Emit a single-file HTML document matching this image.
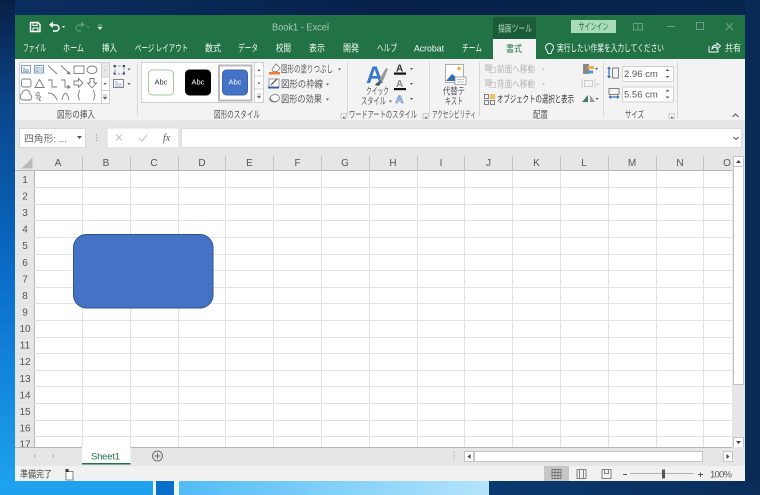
<!DOCTYPE html>
<html lang="ja"><head><meta charset="utf-8"><title>Book1 - Excel</title>
<style>
html,body{margin:0;padding:0;width:760px;height:495px;overflow:hidden;background:#0a2a55}
svg{display:block;filter:blur(.25px)}
text{font-family:"Liberation Sans","Noto Sans CJK JP",sans-serif;font-size:9px;fill:#444}
.tab{fill:#f4f8f6;font-size:9.500px}
.g{fill:#555;font-size:9.500px}
.h{fill:#555;font-size:10px;text-anchor:middle}
.r{fill:#555;font-size:10px;text-anchor:middle}
.d{fill:#b5b5b5;font-size:9.500px}
.i{fill:none;stroke:#7a7a7a;stroke-width:.9}
</style></head><body>
<svg width="760" height="495" viewBox="0 0 760 495" xmlns="http://www.w3.org/2000/svg">
<defs>
<linearGradient id="lft" x1="0" y1="0" x2="0" y2="1"><stop offset="0" stop-color="#081f45"/><stop offset=".2" stop-color="#0a4488"/><stop offset=".55" stop-color="#0a6cc8"/><stop offset="1" stop-color="#1ea4f0"/></linearGradient>
<linearGradient id="top" x1="0" y1="0" x2="1" y2="0"><stop offset="0" stop-color="#0a2f60"/><stop offset=".5" stop-color="#07214a"/><stop offset="1" stop-color="#07264f"/></linearGradient>
<linearGradient id="lb" x1="0" y1="0" x2="1" y2="0"><stop offset="0" stop-color="#52bcf5"/><stop offset="1" stop-color="#b4e4fb"/></linearGradient>
<linearGradient id="rb" x1="0" y1="0" x2="1" y2="0"><stop offset="0" stop-color="#0a3a70"/><stop offset="1" stop-color="#0a2d5a"/></linearGradient>
</defs>
<!-- desktop -->
<rect width="760" height="495" fill="url(#top)"/>
<rect width="15" height="495" fill="url(#lft)"/>
<rect x="745" width="15" height="495" fill="#082a55"/>
<rect y="481" width="153" height="14" fill="#1ea2f0"/>
<rect x="153" y="481" width="3" height="14" fill="#eaf6fd"/>
<rect x="156" y="481" width="18" height="14" fill="#0a6fc8"/>
<rect x="174" y="481" width="5" height="14" fill="#eaf6fd"/>
<rect x="179" y="481" width="310" height="14" fill="url(#lb)"/>
<rect x="489" y="481" width="271" height="14" fill="url(#rb)"/>
<!-- window -->
<rect x="15" y="15" width="730" height="466" fill="#e6e6e6"/>
<rect x="15" y="15" width="730" height="44" fill="#217346"/>
<rect x="493" y="17" width="43" height="22" fill="#1a5c38"/>
<!-- QAT -->
<g fill="none" stroke="#fff" stroke-width="1.4">
<path d="M30.500 22.500h7.500l2 2v7h-9.500z"/><path d="M33 23v2.500h4V23M33 31.500v-3.500h5v3.500" stroke-width="1"/>
<path d="M50 25h6a3 3 0 0 1 0 6h-3"/></g>
<path d="M53 21.500v6.500l-4-3.200z" fill="#fff"/>
<path d="M62 26h3l-1.500 2z" fill="#fff"/>
<path d="M84 25h-5a3 3 0 0 0 0 6h2" fill="none" stroke="#5f9a7c" stroke-width="1.200"/>
<path d="M81 21.500v6l4-3z" fill="#5f9a7c"/>
<path d="M86.500 26.500h3l-1.500 2z" fill="#5f9a7c"/>
<path d="M98 25h4M98 27h4l-2 2.500z" fill="#dcebe3" stroke="#dcebe3" stroke-width=".6"/>
<!-- title -->
<text x="272" y="30.500" style="fill:#a7c9b6;font-size:10px" textLength="57" lengthAdjust="spacingAndGlyphs">Book1  -  Excel</text>
<text x="498" y="32" style="fill:#b5d3c2;font-size:9.500px" textLength="34" lengthAdjust="spacingAndGlyphs">描画ツール</text>
<rect x="571" y="20" width="45" height="13" fill="#a9dbb9"/>
<text x="578.500" y="30" style="fill:#217346;font-size:9.500px" textLength="30" lengthAdjust="spacingAndGlyphs">サインイン</text>
<g fill="none" stroke="#74a68c" stroke-width=".9">
<rect x="633.500" y="23.500" width="9" height="6.500"/><path d="M638 23.500v6.500"/>
<path d="M667 26.500h8"/><rect x="696.500" y="22.500" width="7" height="7"/><path d="M726 23l7 7M733 23l-7 7"/></g>
<!-- tabs -->
<text class="tab" x="23" y="51.500" textLength="23" lengthAdjust="spacingAndGlyphs">ファイル</text>
<text class="tab" x="63" y="51.500" textLength="21" lengthAdjust="spacingAndGlyphs">ホーム</text>
<text class="tab" x="102" y="51.500" textLength="15" lengthAdjust="spacingAndGlyphs">挿入</text>
<text class="tab" x="135" y="51.500" textLength="53" lengthAdjust="spacingAndGlyphs">ページ レイアウト</text>
<text class="tab" x="205" y="51.500" textLength="16" lengthAdjust="spacingAndGlyphs">数式</text>
<text class="tab" x="238" y="51.500" textLength="20" lengthAdjust="spacingAndGlyphs">データ</text>
<text class="tab" x="276" y="51.500" textLength="15" lengthAdjust="spacingAndGlyphs">校閲</text>
<text class="tab" x="309" y="51.500" textLength="16" lengthAdjust="spacingAndGlyphs">表示</text>
<text class="tab" x="343" y="51.500" textLength="16" lengthAdjust="spacingAndGlyphs">開発</text>
<text class="tab" x="377" y="51.500" textLength="20" lengthAdjust="spacingAndGlyphs">ヘルプ</text>
<text class="tab" x="414" y="51.500" textLength="30" lengthAdjust="spacingAndGlyphs">Acrobat</text>
<text class="tab" x="462" y="51.500" textLength="20" lengthAdjust="spacingAndGlyphs">チーム</text>
<rect x="493" y="39" width="43" height="21" fill="#f3f3f3"/>
<text x="506" y="52" style="fill:#217346;font-size:9.500px" textLength="16" lengthAdjust="spacingAndGlyphs">書式</text>
<path d="M549.500 43.500a4 4 0 0 1 4 4c0 2-2 3-2.500 6h-3c-.5-3-2.500-4-2.500-6a4 4 0 0 1 4-4z" fill="none" stroke="#fff" stroke-width=".9"/>
<text class="tab" x="557" y="51.500" textLength="107" lengthAdjust="spacingAndGlyphs">実行したい作業を入力してください</text>
<path d="M709 46v6h9v-3M712 49c0-3 2-4 5-4v-2l3.500 3-3.500 3v-2c-2 0-4 .5-5 2z" fill="none" stroke="#fff" stroke-width=".9"/>
<text class="tab" x="725" y="51.500" textLength="16" lengthAdjust="spacingAndGlyphs">共有</text>
<!-- ribbon -->
<rect x="15" y="59" width="730" height="61" fill="#f3f3f3"/>
<g stroke="#d6d6d6"><path d="M137.500 62v54M347.500 62v54M429.500 62v54M479.500 62v54M603.500 62v54M677.500 62v56"/></g>
<!-- shapes gallery -->
<rect x="19.500" y="62.500" width="90" height="41" fill="#fff" stroke="#cfcfcf"/>
<rect x="101" y="63" width="8" height="14" fill="#e8e8e8"/>
<path d="M101.500 63v40M101.500 77h8M101.500 90.500h8" stroke="#cfcfcf"/>
<path d="M103.500 71l1.500-2 1.500 2z" fill="#c5c5c5"/><path d="M103.500 83l1.500 2 1.500-2z" fill="#555"/>
<path d="M103 95h4M103 97l2 2.500 2-2.500z" stroke="#666" stroke-width=".5" fill="#666"/>
<g class="i">
<rect x="21.500" y="65.500" width="9" height="7.500" stroke="#6f8fb8"/><path d="M23 68h2M23 70h6M23 71.800h6" stroke="#6f8fb8"/>
<rect x="34.500" y="65.500" width="9" height="7.500" stroke="#6f8fb8"/><path d="M36 67.500h2v4h-2zM40 67v5M42 67v5" stroke="#6f8fb8" stroke-width=".7"/>
<path d="M48 65.500l9 8.500M61 65.500l9 8.500"/><path d="M70 74l-2.500-.5 1.500-1.500z" fill="#777"/>
<rect x="74" y="66" width="10" height="7.500"/><ellipse cx="92" cy="69.800" rx="5" ry="3.800"/>
<rect x="21.500" y="79" width="9.500" height="8" rx="2"/><path d="M35 87.500l4.500-8 4.500 8z"/>
<path d="M48 80h4v7h5M61 80h4v7h4"/><path d="M70 87l-2-1.500v3z" fill="#777"/>
<path d="M74 81h4.500v-2.500l4.500 4.500-4.500 4.500v-2.500h-4.500z"/><path d="M90 78.500h4v4.500h2.500l-4.500 5-4.500-5h2.500z"/>
<path d="M23 100a3.500 3.500 0 0 1-1-6.500 4 4 0 0 1 8 1 3 3 0 0 1 0 5.500z"/>
<path d="M38 92l-2.500 3 3 1-2 2 4 3-1.500-3 2-1-2.500-2 1-2z" stroke-width=".7"/>
<path d="M48 93c4 0 7 2 9 7M62 100c2-9 5-9 7 0"/>
<path d="M80 92.500c-1.500 0-1 3-1.500 4s-1 1-1 1 .500 0 1 1 0 3.500 1.500 3.500" transform="translate(0 -2)"/>
<path d="M93 92.500c1.500 0 1 3 1.500 4s1 1 1 1-.5 0-1 1 0 3.500-1.500 3.500" transform="translate(0 -2)"/>
</g>
<!-- edit shape -->
<g fill="#fff" stroke="#3f6fb5" stroke-width=".8"><path d="M115 66h9v8h-9z" stroke-dasharray="2 1.500" fill="none"/></g>
<g fill="#444"><rect x="113.500" y="65" width="2" height="2"/><rect x="123" y="65" width="2" height="2"/><rect x="113.500" y="72.500" width="2" height="2"/><rect x="123" y="72.500" width="2" height="2"/></g>
<path d="M127.500 68.500h3l-1.500 2z" fill="#555"/>
<rect x="113.500" y="79.500" width="10" height="8" fill="#fff" stroke="#666" stroke-width=".8"/><path d="M115 82h3M115 84h7M115 86h7" stroke="#3f6fb5" stroke-width=".6"/>
<path d="M127.500 83h3l-1.500 2z" fill="#555"/>
<text class="g" x="57" y="118" textLength="38" lengthAdjust="spacingAndGlyphs">図形の挿入</text>
<!-- style gallery -->
<rect x="141.500" y="62.500" width="122" height="40" fill="#fff" stroke="#cfcfcf"/>
<rect x="219" y="65.500" width="32.500" height="35" fill="#fff" stroke="#b9b9b9" stroke-width="2"/>
<rect x="148.500" y="70" width="25" height="25" rx="4" fill="#fff" stroke="#a4c896"/>
<rect x="185" y="69.500" width="26" height="26" rx="4.500" fill="#000"/>
<rect x="222.500" y="70" width="25" height="25" rx="4" fill="#4472c4" stroke="#3a62aa"/>
<text x="154.500" y="84.500" style="fill:#333;font-size:7.500px">Abc</text>
<text x="191.500" y="84.500" style="fill:#fff;font-size:7.500px">Abc</text>
<text x="228.500" y="84.500" style="fill:#fff;font-size:7.500px">Abc</text>
<path d="M254.500 63v39M254.500 76h9M254.500 89h9" stroke="#cfcfcf"/>
<path d="M257.500 71l1.500-2 1.500 2z" fill="#555"/><path d="M257.500 82.500l1.500 2 1.500-2z" fill="#555"/>
<path d="M257 94h4M257 96l2 2.500 2-2.500z" stroke="#777" stroke-width=".5" fill="#777"/>
<!-- fill/outline/effect -->
<path d="M272 69l4-5 4 4-3 3.500h-4z" fill="#fff" stroke="#777" stroke-width=".8"/>
<rect x="269" y="72" width="11" height="2.500" fill="#ed7d31"/>
<text class="g" x="281" y="72.500" textLength="52" lengthAdjust="spacingAndGlyphs">図形の塗りつぶし</text>
<path d="M338 68.500h3l-1.500 2z" fill="#555"/>
<rect x="269" y="79" width="10" height="8" fill="#fff" stroke="#777" stroke-width=".7"/><path d="M271 85l6-6" stroke="#444" stroke-width="1.200"/>
<rect x="268" y="86.500" width="11" height="2" fill="#2f5fb3"/>
<text class="g" x="281" y="87.500" textLength="42" lengthAdjust="spacingAndGlyphs">図形の枠線</text>
<path d="M326 83.500h3l-1.500 2z" fill="#555"/>
<ellipse cx="274" cy="99" rx="5" ry="3.500" fill="#999"/><ellipse cx="275" cy="98" rx="4.500" ry="3.500" fill="#fff" stroke="#666" stroke-width=".7"/>
<text class="g" x="281" y="102.500" textLength="41" lengthAdjust="spacingAndGlyphs">図形の効果</text>
<path d="M326 98.500h3l-1.500 2z" fill="#555"/>
<text class="g" x="214" y="118" textLength="46" lengthAdjust="spacingAndGlyphs">図形のスタイル</text>
<path d="M341 113.500h5v5h-5z" fill="none" stroke="#aaa" stroke-width=".6"/><path d="M343 116l3 2.500h-3z" fill="#777"/>
<!-- wordart -->
<text x="366" y="83" style="fill:#3a78c8;font-size:24px;font-weight:bold">A</text>
<path d="M379 80l7-12 2 1-5 12z" fill="#999"/><path d="M375 85c2-3 4-4 6-3l-1 3c-2 1-3 1-5 0z" fill="#555"/>
<text class="g" x="366" y="94.500" textLength="23" lengthAdjust="spacingAndGlyphs">クイック</text>
<text class="g" x="361" y="104.500" textLength="25" lengthAdjust="spacingAndGlyphs">スタイル</text>
<path d="M389 100.500h3l-1.500 2z" fill="#555"/>
<text x="396" y="71.500" style="fill:#333;font-size:10px;font-weight:bold">A</text><rect x="394" y="72.500" width="12" height="2.200" fill="#111"/>
<text x="396" y="87" style="fill:#888;font-size:10px;font-weight:bold">A</text><rect x="394" y="88" width="12" height="2.200" fill="#111"/>
<text x="395.500" y="103" style="fill:#cfe0f5;stroke:#4a80c8;stroke-width:.6px;font-size:11px;font-weight:bold">A</text>
<path d="M410 68h3l-1.500 2zM410 83h3l-1.500 2zM410 98h3l-1.500 2z" fill="#555"/>
<text class="g" x="349" y="118" textLength="68" lengthAdjust="spacingAndGlyphs">ワードアートのスタイル</text>
<path d="M423 113.500h5v5h-5z" fill="none" stroke="#aaa" stroke-width=".6"/><path d="M425 116l3 2.500h-3z" fill="#777"/>
<!-- alt text -->
<rect x="445.500" y="64.500" width="18" height="18" fill="#fff" stroke="#999" stroke-width=".8"/>
<circle cx="459" cy="68.500" r="1.800" fill="#f0b040"/>
<path d="M446 81l6-7 4 3 3 3v1z" fill="#2f6fb5"/>
<rect x="455" y="77" width="11" height="7.500" fill="#fff" stroke="#888" stroke-width=".7"/><path d="M457 79.500h7M457 82h7" stroke="#888" stroke-width=".6"/>
<text class="g" x="443" y="94.500" textLength="22" lengthAdjust="spacingAndGlyphs">代替テ</text>
<text class="g" x="445" y="104.500" textLength="18" lengthAdjust="spacingAndGlyphs">キスト</text>
<text class="g" x="432" y="118" textLength="44" lengthAdjust="spacingAndGlyphs">アクセシビリティ</text>
<!-- arrange -->
<g fill="#d4d4d4"><rect x="485" y="64" width="7" height="7"/><rect x="485" y="79" width="7" height="7"/></g>
<g fill="none" stroke="#c8c8c8" stroke-width=".8"><rect x="489.500" y="67.500" width="6" height="5"/><rect x="489.500" y="82.500" width="6" height="5"/></g>
<text class="d" x="497" y="72.500" textLength="38" lengthAdjust="spacingAndGlyphs">前面へ移動</text>
<path d="M542 68.500h3l-1.500 2z" fill="#c0c0c0"/>
<text class="d" x="497" y="87.500" textLength="38" lengthAdjust="spacingAndGlyphs">背面へ移動</text>
<path d="M542 83.500h3l-1.500 2z" fill="#c0c0c0"/>
<g fill="none" stroke="#666" stroke-width=".8"><rect x="484.500" y="94.500" width="4" height="4"/><rect x="484.500" y="100.500" width="4" height="4"/><rect x="490.500" y="100.500" width="4" height="4"/></g>
<rect x="490" y="94" width="5" height="5" fill="#f0c060"/>
<text x="497" y="102.500" style="fill:#333;font-size:9.500px" textLength="77" lengthAdjust="spacingAndGlyphs">オブジェクトの選択と表示</text>
<rect x="583" y="64" width="6" height="10" fill="#8a8a8a"/><rect x="588" y="66" width="6" height="3" fill="#f0b040"/><rect x="588" y="70.500" width="5" height="3" fill="#5b8fd0"/>
<path d="M595 68h3l-1.500 2z" fill="#555"/>
<g fill="none" stroke="#c4c4c4" stroke-width=".8"><rect x="584.500" y="80.500" width="8" height="6"/><path d="M582 79v9M595 79v9"/></g>
<path d="M596.500 83.500h3l-1.500 2z" fill="#c0c0c0"/>
<path d="M582 102l6-7v7z" fill="#3f7f5f"/><path d="M590 102v-7l5 7z" fill="#999"/>
<path d="M595.500 98h3l-1.500 2z" fill="#555"/>
<text class="g" x="533" y="118" textLength="15" lengthAdjust="spacingAndGlyphs">配置</text>
<!-- size -->
<g fill="none" stroke="#666" stroke-width=".8"><rect x="612.500" y="68" width="6" height="10"/></g>
<path d="M609 67v11" stroke="#2f6fb5" stroke-width="1.200"/><path d="M607 69l2-2.500 2 2.500zM607 76l2 2.500 2-2.500z" fill="#2f6fb5"/>
<rect x="609" y="88.500" width="10" height="6" fill="none" stroke="#666" stroke-width=".8"/>
<path d="M609 97h10" stroke="#2f6fb5" stroke-width="1.200"/><path d="M611 95l-2.500 2 2.500 2zM617 95l2.500 2-2.500 2z" fill="#2f6fb5"/>
<rect x="622.500" y="66.500" width="51" height="15" fill="#fff" stroke="#d0d0d0"/>
<rect x="622.500" y="87" width="51" height="15" fill="#fff" stroke="#d0d0d0"/>
<text x="624" y="77" style="fill:#555;font-size:9.500px">2.96 cm</text>
<text x="624" y="97.500" style="fill:#555;font-size:9.500px">5.56 cm</text>
<path d="M665.500 71l2-2 2 2zM665.500 76l2 2 2-2zM665.500 91.500l2-2 2 2zM665.500 96.500l2 2 2-2z" fill="#555"/>
<text class="g" x="625" y="118" textLength="19" lengthAdjust="spacingAndGlyphs">サイズ</text>
<path d="M669 113.500h5v5h-5z" fill="none" stroke="#aaa" stroke-width=".6"/><path d="M671 116l3 2.500h-3z" fill="#777"/>
<path d="M732.500 117l3-3 3 3" fill="none" stroke="#555" stroke-width="1"/>
<!-- formula bar -->
<rect x="15" y="120" width="730" height="33" fill="#e6e6e6"/>
<rect x="19.500" y="128.500" width="66" height="19" fill="#fff" stroke="#d8d8d8"/>
<text x="24" y="142" style="fill:#666;font-size:9.500px" textLength="43" lengthAdjust="spacingAndGlyphs">四角形: ...</text>
<path d="M77 136h5l-2.500 3z" fill="#555"/>
<path d="M96.500 134v1.500M96.500 137v1.500M96.500 140v1.500" stroke="#aaa"/>
<rect x="107" y="128" width="72" height="20" fill="#fff" stroke="#dcdcdc"/>
<path d="M116 134.500l6 6M122 134.500l-6 6" stroke="#c0c0c0" stroke-width="1"/>
<path d="M139 138l3 3 5-6" fill="none" stroke="#c0c0c0" stroke-width="1"/>
<text x="163" y="141" style="fill:#555;font-family:'Liberation Serif',serif;font-size:10px;font-style:italic">fx</text>
<rect x="181.500" y="128.500" width="560" height="19" fill="#fff" stroke="#dcdcdc"/>
<path d="M733.500 137l2.500 2.500 2.500-2.500" fill="none" stroke="#555" stroke-width="1"/>
<!-- headers -->
<rect x="15" y="155" width="717" height="16" fill="#e6e6e6"/>
<rect x="15" y="171" width="20" height="276" fill="#e6e6e6"/>
<rect x="35" y="171" width="697" height="276" fill="#fff"/>
<path d="M32.500 157.500v11h-11z" fill="#b9b9b9"/>
<path d="M15 170.500h717" stroke="#b5b5b5"/>
<path d="M34.500 171v276" stroke="#b5b5b5"/>
<g stroke="#c4c4c4"><path d="M82.500 156v15M130.500 156v15M178.500 156v15M225.500 156v15M273.500 156v15M321.500 156v15M369.500 156v15M417.500 156v15M464.500 156v15M512.500 156v15M560.500 156v15M608.500 156v15M656.500 156v15M703.500 156v15"/></g>
<!-- grid -->
<g stroke="#e2e2e2">
<path d="M82.500 171v276M130.500 171v276M178.500 171v276M225.500 171v276M273.500 171v276M321.500 171v276M369.500 171v276M417.500 171v276M464.500 171v276M512.500 171v276M560.500 171v276M608.500 171v276M656.500 171v276M703.500 171v276"/>
<path d="M15 187.500h717M15 204.500h717M15 220.500h717M15 237.500h717M15 254.500h717M15 270.500h717M15 287.500h717M15 303.500h717M15 320.500h717M15 337.500h717M15 353.500h717M15 370.500h717M15 386.500h717M15 403.500h717M15 420.500h717M15 436.500h717"/>
</g>
<g>
<text class="h" x="58" y="166">A</text><text class="h" x="106" y="166">B</text><text class="h" x="154" y="166">C</text><text class="h" x="202" y="166">D</text><text class="h" x="249.500" y="166">E</text><text class="h" x="297.500" y="166">F</text><text class="h" x="345" y="166">G</text><text class="h" x="393" y="166">H</text><text class="h" x="441" y="166">I</text><text class="h" x="488.500" y="166">J</text><text class="h" x="536.500" y="166">K</text><text class="h" x="584" y="166">L</text><text class="h" x="632" y="166">M</text><text class="h" x="680" y="166">N</text><text class="h" x="727" y="166">O</text>
</g>
<g>
<text class="r" x="25" y="183">1</text><text class="r" x="25" y="199.500">2</text><text class="r" x="25" y="216">3</text><text class="r" x="25" y="232.500">4</text><text class="r" x="25" y="249">5</text><text class="r" x="25" y="266">6</text><text class="r" x="25" y="282.500">7</text><text class="r" x="25" y="299">8</text><text class="r" x="25" y="315.500">9</text><text class="r" x="25" y="332">10</text><text class="r" x="25" y="348.500">11</text><text class="r" x="25" y="365">12</text><text class="r" x="25" y="382">13</text><text class="r" x="25" y="398.500">14</text><text class="r" x="25" y="415">15</text><text class="r" x="25" y="431.500">16</text><text class="r" x="25" y="447.500">17</text>
</g>
<!-- shape -->
<rect x="73.500" y="234.500" width="139.500" height="73.500" rx="13" fill="#4472c4" stroke="#2f528f"/>
<!-- v scrollbar -->
<rect x="732" y="155" width="13" height="292" fill="#e6e6e6"/>
<rect x="733.500" y="156.500" width="10" height="10" fill="#fff" stroke="#c4c4c4"/>
<path d="M736 163l2.500-3 2.500 3z" fill="#444"/>
<rect x="733.500" y="166.500" width="10" height="218" fill="#fff" stroke="#c4c4c4"/>
<rect x="733.500" y="437.500" width="10" height="10" fill="#fff" stroke="#c4c4c4"/>
<path d="M736 441l2.500 3 2.500-3z" fill="#444"/>
<!-- sheet bar -->
<rect x="15" y="447" width="730" height="19" fill="#e6e6e6"/>
<path d="M15 447.500h717" stroke="#b5b5b5"/>
<path d="M36 456l-2-2v4zM52 456l2-2v4z" fill="#bdbdbd"/>
<rect x="82" y="447" width="48.500" height="17" fill="#fff"/>
<rect x="82" y="463" width="48.500" height="1.500" fill="#217346"/>
<text x="91" y="459.500" style="fill:#217346;font-size:9.500px" textLength="29">Sheet1</text>
<circle cx="157.500" cy="456" r="5" fill="none" stroke="#666" stroke-width=".9"/>
<path d="M154.500 456h6M157.500 453v6" stroke="#666" stroke-width=".9"/>
<path d="M454 451.500v1.500M454 455v1.500M454 458.500v1.500" stroke="#aaa"/>
<rect x="464.500" y="451.500" width="9" height="10" fill="#fff" stroke="#c4c4c4"/><path d="M470.500 454v5l-3-2.500z" fill="#444"/>
<rect x="474.500" y="451.500" width="228" height="10" fill="#fff" stroke="#c4c4c4"/>
<rect x="723.500" y="451.500" width="9" height="10" fill="#fff" stroke="#c4c4c4"/><path d="M726.500 454v5l3-2.500z" fill="#444"/>
<!-- status bar -->
<rect x="15" y="466" width="730" height="15" fill="#f1f1f1"/>
<text x="20" y="477.500" style="fill:#444;font-size:9.500px" textLength="32" lengthAdjust="spacingAndGlyphs">準備完了</text>
<rect x="66" y="471.500" width="7" height="8.500" fill="#fff" stroke="#666" stroke-width=".8"/>
<rect x="65.500" y="469" width="3" height="3" fill="#333"/>
<rect x="544" y="466" width="25" height="15" fill="#c6c6c6"/>
<g fill="none" stroke="#666" stroke-width=".8">
<path d="M552 469.500h9v9h-9zM552 472.500h9M552 475.500h9M555 469.500v9M558 469.500v9"/>
<path d="M577 469.500h9v9h-9zM579.500 469.500v9M583.500 469.500v9"/>
<path d="M602 469.500h9v9h-9zM604.500 469.500v4h4v-4"/>
</g>
<path d="M623 474.500h4M698 474.500h5M700.500 472.500v4.500" stroke="#555"/>
<path d="M630 473.500h64" stroke="#b0b0b0"/>
<rect x="662" y="469.500" width="3" height="9" fill="#555"/>
<text x="710" y="477.500" style="fill:#555;font-size:9.500px" textLength="22">100%</text>
</svg>
</body></html>
